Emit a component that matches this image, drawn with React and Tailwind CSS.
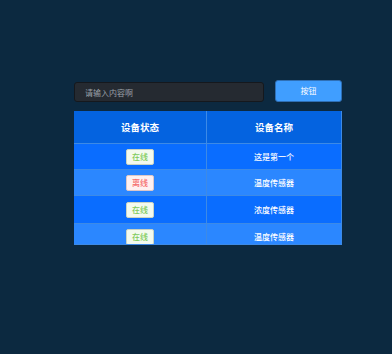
import React, { useState } from "react";

const rows = [
  { status: "在线", online: true, name: "这是第一个" },
  { status: "离线", online: false, name: "温度传感器" },
  { status: "在线", online: true, name: "浓度传感器" },
  { status: "在线", online: true, name: "温度传感器" },
];

const font = { fontFamily: '"Noto Sans CJK SC", "Noto Sans", sans-serif' };

const Tag = ({ online, children }) => (
  <span
    className={
      online
        ? "inline-flex items-center justify-center h-[16px] w-[28px] rounded-[2px] border border-[#c9d3c2] bg-[#f3faee] text-[#7fcb5c] text-[8px] leading-none"
        : "inline-flex items-center justify-center h-[16px] w-[28px] rounded-[2px] border border-[#dcc7c7] bg-[#fef0f0] text-[#f56c6c] text-[8px] leading-none"
    }
  >
    {children}
  </span>
);

const App = () => {
  const [value, setValue] = useState("");
  const rowBg = ["bg-[#0a6dff]", "bg-[#2b87ff]", "bg-[#0a6dff]", "bg-[#2b87ff]"];
  const rowH = ["h-[26px]", "h-[26px]", "h-[28px]", "h-[27px]"];

  return (
    <div className="w-[392px] h-[354px] bg-[#0c2940] pt-[80px] pl-[74px]" style={font}>
      <div className="w-[268px] flex items-center gap-[11px]">
        <input
          className="w-[190px] h-[20px] mt-[2px] rounded-[3px] bg-[#252a31] border border-[#15181d] px-[10px] text-[8px] text-white placeholder:text-[#9aa0a8] outline-none"
          placeholder="请输入内容啊"
          value={value}
          onChange={(e) => setValue(e.target.value)}
        />
        <button className="flex-1 h-[22px] rounded-[3px] bg-[#409eff] border border-[#2f6fb5] text-white text-[8px]">
          按钮
        </button>
      </div>
      <div className="mt-[9px] w-[268px] h-[134px] overflow-hidden border-b border-r border-[#3d8ae6]">
        <div className="flex h-[33px] bg-[#0463e0] text-white text-[9.5px] font-semibold border-b border-[#3d8ae6]">
          <div className="w-[133px] flex items-center justify-center border-r border-[#3d8ae6]">设备状态</div>
          <div className="flex-1 flex items-center justify-center">设备名称</div>
        </div>
        {rows.map((r, i) => (
          <div key={i} className={`flex ${rowH[i]} ${rowBg[i]} border-b border-[#3d8ae6] text-white text-[8px] font-medium`}>
            <div className="w-[133px] flex items-center justify-center border-r border-[#3d8ae6]">
              <Tag online={r.online}>{r.status}</Tag>
            </div>
            <div className="flex-1 flex items-center justify-center">{r.name}</div>
          </div>
        ))}
      </div>
    </div>
  );
};

export default App;
